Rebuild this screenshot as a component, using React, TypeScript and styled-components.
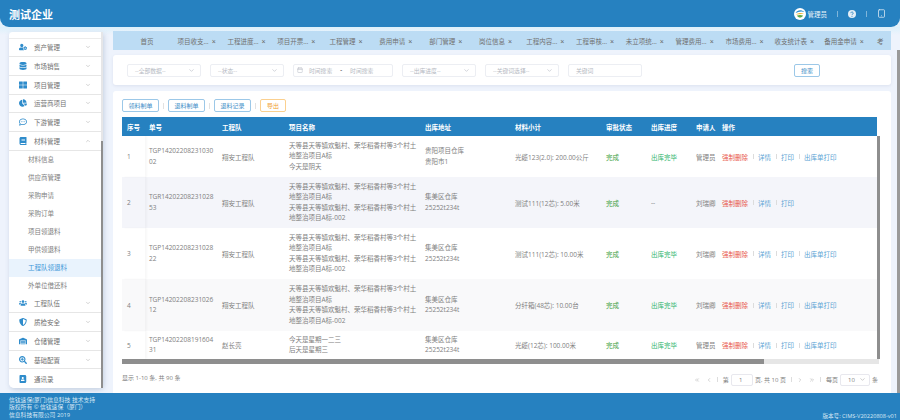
import React from "react";
import styled, { createGlobalStyle } from "styled-components";
import { FaUserCog, FaDatabase, FaThLarge, FaChartPie, FaRegCommentDots, FaBook, FaUsers, FaShieldAlt, FaWarehouse, FaSearchPlus, FaAddressBook } from "react-icons/fa";
import { ChevronDown, ChevronUp, ChevronLeft, ChevronRight, ChevronsLeft, ChevronsRight, Calendar, Tablet } from "lucide-react";

const GlobalStyle = createGlobalStyle`
  html, body { margin: 0; padding: 0; width: 900px; height: 420px; overflow: hidden; }
  * { box-sizing: border-box; }
  body { font-family: "Open Sans", "Noto Sans CJK SC", sans-serif; font-size: 6.5px; color: #808080; }
`;

const menuTop = [
  { name: "资产管理", icon: <FaUserCog /> },
  { name: "市场销售", icon: <FaDatabase /> },
  { name: "项目管理", icon: <FaThLarge /> },
  { name: "运营商项目", icon: <FaChartPie /> },
  { name: "下游管理", icon: <FaRegCommentDots /> },
];
const subMenu = ["材料信息", "供应商管理", "采购申请", "采购订单", "项目领退料", "甲供领退料", "工程队领退料", "外单位借还料"];
const menuBottom = [
  { name: "工程队伍", icon: <FaUsers />, arrow: true },
  { name: "质检安全", icon: <FaShieldAlt />, arrow: true },
  { name: "仓储管理", icon: <FaWarehouse />, arrow: true },
  { name: "基础配置", icon: <FaSearchPlus />, arrow: true },
  { name: "通讯录", icon: <FaAddressBook />, arrow: false },
];
const tabs = ["项目收支…", "工程进度…", "项目开票…", "工程管理", "费用申请", "部门管理", "岗位信息", "工程内容…", "工程审核…", "未立项统…", "管理费用…", "市场费用…", "收支统计表", "备用金申请"];

const longName = "天等县天等镇欢魁村、荣华稻香村等3个村土";
const rows = [
  { no: ["TGP14202208231030", "02"], team: "翔安工程队", project: [longName, "地整治项目A标", "今天是阴天"], addr: ["贵阳项目仓库", "贵阳市1"], mat: "光缆123(2.0): 200.00公斤", out: "出库完毕", user: "管理员", print: true, h: 41, bg: "#fff" },
  { no: ["TGR14202208231028", "53"], team: "翔安工程队", project: [longName, "地整治项目A标", longName, "地整治项目A标-002"], addr: ["集美区仓库", "25252t234t"], mat: "测试111(12芯): 5.00米", out: "--", user: "刘瑞卿", print: false, h: 51, bg: "#f4f5fa" },
  { no: ["TGP14202208231028", "22"], team: "翔安工程队", project: [longName, "地整治项目A标", longName, "地整治项目A标-002"], addr: ["集美区仓库", "25252t234t"], mat: "测试111(12芯): 10.00米", out: "出库完毕", user: "刘瑞卿", print: true, h: 51, bg: "#fff" },
  { no: ["TGP14202208231026", "12"], team: "翔安工程队", project: [longName, "地整治项目A标", longName, "地整治项目A标-002"], addr: ["集美区仓库", "25252t234t"], mat: "分纤箱(48芯): 10.00台", out: "出库完毕", user: "刘瑞卿", print: true, h: 52, bg: "#f9f9fa" },
  { no: ["TGP14202208191604", "31"], team: "赵长亮", project: ["今天是星期一二三", "后天是星期三"], addr: ["集美区仓库", "25252t234t"], mat: "光缆(12芯): 100.00米", out: "出库完毕", user: "管理员", print: true, h: 28, bg: "#fff" },
];
const columns = [
  { title: "序号", w: 23 }, { title: "单号", w: 73 }, { title: "工程队", w: 67 }, { title: "项目名称", w: 136 }, { title: "出库地址", w: 90 },
  { title: "材料小计", w: 91 }, { title: "审批状态", w: 45 }, { title: "出库进度", w: 45 }, { title: "申请人", w: 26 }, { title: "操作", w: 159 },
];

export default function App() {
  return (
    <Page>
      <GlobalStyle />
      <Header>
        <Title>测试企业</Title>
        <HeaderRight>
          <Avatar viewBox="0 0 24 24">
            <circle cx="12" cy="12" r="12" fill="#fff" />
            <path d="M3 10C7 3 15 3 21 8c-6-2-12-1-18 2z" fill="#2f8fd0" />
            <path d="M4 13c5-4 11-4 16-1-5-.5-11 0-16 1z" fill="#f2b632" />
            <path d="M6 15c4-1.500 8-1.500 12 0-1 3-4 4-6 4s-5-1-6-4z" fill="#5ba84a" />
          </Avatar>
          <UserName>管理员</UserName>
          <HeaderSep />
          <HelpIcon viewBox="0 0 24 24">
            <circle cx="12" cy="12" r="12" fill="#e4eef6" />
            <path d="M8.500 9.500a3.500 3.500 0 1 1 5.500 2.800c-1.200.8-2 1.400-2 2.900" fill="none" stroke="#2681c0" strokeWidth="2.600" />
            <circle cx="12" cy="19" r="1.600" fill="#2681c0" />
          </HelpIcon>
          <HeaderSep />
          <Tablet size={9} color="#e4eef6" strokeWidth={2} />
        </HeaderRight>
      </Header>

      <Main>
        <Sidebar>
          <MenuBox>
            <TopStub />
            {menuTop.map((m) => (
              <MenuItem key={m.name}>
                <MenuIcon>{m.icon}</MenuIcon>
                <MenuName>{m.name}</MenuName>
                <ChevronDown size={6} color="#aaa" />
              </MenuItem>
            ))}
            <MenuItem>
              <MenuIcon><FaBook /></MenuIcon>
              <MenuName>材料管理</MenuName>
              <ChevronUp size={6} color="#aaa" />
            </MenuItem>
            {subMenu.map((s) => (
              <SubItem key={s} $active={s === "工程队领退料"}>{s}</SubItem>
            ))}
            {menuBottom.map((m) => (
              <MenuItem key={m.name}>
                <MenuIcon>{m.icon}</MenuIcon>
                <MenuName>{m.name}</MenuName>
                {m.arrow && <ChevronDown size={6} color="#aaa" />}
              </MenuItem>
            ))}
          </MenuBox>
          <SideScroll><SideThumb /></SideScroll>
        </Sidebar>

        <Content>
          <TabBar>
            <Tab>首页</Tab>
            {tabs.map((t) => (
              <Tab key={t}>{t}<TabClose>×</TabClose></Tab>
            ))}
            <LastTab>考</LastTab>
          </TabBar>

          <SearchCard>
            <Select>--全部数据--<ChevronDown size={7} color="#b5b9c2" /></Select>
            <Select>--状态--<ChevronDown size={7} color="#b5b9c2" /></Select>
            <DateField>
              <Calendar size={6} color="#b5b9c2" />
              <span>时间搜索</span><b>-</b><span>时间搜索</span>
            </DateField>
            <Select>--出库进度--<ChevronDown size={7} color="#b5b9c2" /></Select>
            <Select>--关键词选择--<ChevronDown size={7} color="#b5b9c2" /></Select>
            <Select>关键词</Select>
            <SearchBtn>搜索</SearchBtn>
          </SearchCard>

          <TableCard>
            <Toolbar>
              <ToolBtn>领料制单</ToolBtn>
              <ToolSep />
              <ToolBtn>退料制单</ToolBtn>
              <ToolSep />
              <ToolBtn>退料记录</ToolBtn>
              <ToolSep />
              <ToolBtn $orange>导出</ToolBtn>
            </Toolbar>
            <HeadRow>
              {columns.map((c) => <HeadCell key={c.title} $w={c.w}>{c.title}</HeadCell>)}
            </HeadRow>
            <BodyWrap>
              <RowList>
                {rows.map((r, i) => (
                  <Row key={i} $h={r.h} $bg={r.bg}>
                    <IndexCell $w={columns[0].w}>{i + 1}</IndexCell>
                    <Cell $w={columns[1].w}>{r.no.map((l) => <Line key={l}>{l}</Line>)}</Cell>
                    <Cell $w={columns[2].w}>{r.team}</Cell>
                    <Cell $w={columns[3].w}>{r.project.map((l, j) => <Line key={j}>{l}</Line>)}</Cell>
                    <Cell $w={columns[4].w}>{r.addr.map((l) => <Line key={l}>{l}</Line>)}</Cell>
                    <Cell $w={columns[5].w}>{r.mat}</Cell>
                    <Cell $w={columns[6].w} $color="#3f9f3f">完成</Cell>
                    <Cell $w={columns[7].w} $color={r.out === "--" ? "#808080" : "#2fb56c"}>{r.out}</Cell>
                    <Cell $w={columns[8].w}>{r.user}</Cell>
                    <OpCell $w={columns[9].w}>
                      <OpLink $danger>强制删除</OpLink><OpSep />
                      <OpLink>详情</OpLink><OpSep />
                      <OpLink>打印</OpLink>
                      {r.print && <><OpSep /><OpLink>出库单打印</OpLink></>}
                    </OpCell>
                  </Row>
                ))}
              </RowList>
              <TableVScroll />
            </BodyWrap>
            <HScroll><HThumb /></HScroll>
            <PagerRow>
              <PagerTotal>显示 1-10 条, 共 90 条</PagerTotal>
              <Pager>
                <PagerArrows>
                  <ChevronsLeft size={6} color="#aaa" />
                  <ChevronLeft size={6} color="#aaa" />
                </PagerArrows>
                <PagerSep />
                <span>第</span>
                <PageInput>1</PageInput>
                <span>页, 共 10 页</span>
                <PagerSep />
                <PagerArrows>
                  <ChevronRight size={6} color="#aaa" />
                  <ChevronsRight size={6} color="#aaa" />
                </PagerArrows>
                <PagerSep />
                <span>每页</span>
                <PageSize>10<ChevronDown size={7} color="#aaa" /></PageSize>
                <span>条</span>
              </Pager>
            </PagerRow>
          </TableCard>
        </Content>
        <PageScroll />
      </Main>

      <Footer>
        <FooterInfo>
          <div>信钛速保(厦门)信息科技 技术支持</div>
          <div>版权所有 © 信钛速保（厦门）</div>
          <div>信息科技有限公司 2019</div>
        </FooterInfo>
        <Version>版本号: CIMS-V20220808-v01</Version>
      </Footer>
    </Page>
  );
}

const Page = styled.div`
  width: 900px;
  height: 420px;
  display: flex;
  flex-direction: column;
  overflow: hidden;
  background: #e3f1fb;
`;

const Header = styled.div`
  height: 27px;
  flex: none;
  display: flex;
  align-items: center;
  justify-content: space-between;
  padding: 0 14px 0 9px;
  background: #2681c0;
  border-radius: 0 0 9px 9px;
  color: #fff;
`;
const Title = styled.div`
  font-size: 11px;
  font-weight: 700;
  font-family: "Noto Sans CJK SC", sans-serif;
`;
const HeaderRight = styled.div`
  display: flex;
  align-items: center;
`;
const Avatar = styled.svg`
  width: 12px;
  height: 12px;
`;
const UserName = styled.span`
  margin-left: 2px;
  font-size: 6.5px;
  color: #e8f2f9;
`;
const HeaderSep = styled.span`
  width: 1px;
  height: 6px;
  margin: 0 10px;
  background: #7fb5da;
`;
const HelpIcon = styled.svg`
  width: 8px;
  height: 8px;
`;

const Main = styled.div`
  flex: 1;
  min-height: 0;
  display: flex;
  background: linear-gradient(#dcf0fb 0, #eef3fc 8px);
`;

const Sidebar = styled.div`
  width: 94px;
  margin: 5px 10px 5px 9px;
  flex: none;
  display: flex;
  box-shadow: 1px 2px 5px rgba(80, 110, 150, 0.25);
  border-radius: 0 0 5px 5px;
`;
const MenuBox = styled.div`
  width: 92px;
  background: #fff;
  border-radius: 4px 0 0 5px;
  overflow: hidden;
`;
const TopStub = styled.div`
  height: 6.5px;
  border-bottom: 1.5px solid #ececec;
`;
const MenuItem = styled.div`
  height: 18.7px;
  display: flex;
  align-items: center;
  padding: 0 10px;
  border-bottom: 1.2px solid #e6e6e6;
  color: #707070;
  &:last-child { border-bottom: none; }
`;
const MenuIcon = styled.span`
  width: 8px;
  display: flex;
  color: #2f8ccb;
  font-size: 8px;
`;
const MenuName = styled.span`
  flex: 1;
  margin-left: 7px;
  font-size: 6.5px;
`;
const SubItem = styled.div<{ $active?: boolean }>`
  height: 18px;
  line-height: 18px;
  padding-left: 19px;
  font-size: 6.5px;
  color: ${(p) => (p.$active ? "#3d96d8" : "#808080")};
  background: ${(p) => (p.$active ? "#e9f3fd" : "#fff")};
`;
const SideScroll = styled.div`
  width: 2.5px;
  background: #e6e6e8;
  display: flex;
  flex-direction: column;
  justify-content: flex-end;
`;
const SideThumb = styled.div`
  height: 247px;
  background: #8e8e8e;
`;

const Content = styled.div`
  flex: 1;
  min-width: 0;
  padding: 4px 6px 0 0;
  display: flex;
  flex-direction: column;
`;
const TabBar = styled.div`
  height: 19px;
  width: 778px;
  flex: none;
  display: flex;
  align-items: center;
  padding-left: 9px;
  background: #bcdcf4;
  overflow: hidden;
`;
const Tab = styled.div`
  width: 49.8px;
  flex: none;
  text-align: center;
  white-space: nowrap;
  font-size: 6.5px;
  color: #707070;
`;
const LastTab = styled(Tab)`
  width: 14px;
  padding-left: 8px;
  text-align: left;
`;
const TabClose = styled.span`
  margin-left: 3px;
  font-family: "Liberation Sans", sans-serif;
  font-size: 7px;
  color: #666;
`;
const SearchCard = styled.div`
  height: 30px;
  margin-top: 5px;
  flex: none;
  display: flex;
  align-items: center;
  gap: 9px;
  padding: 0 14px;
  background: #fff;
  border-radius: 3px;
  box-shadow: 0 1px 3px rgba(120, 130, 170, 0.15);
`;
const Select = styled.div`
  width: 74px;
  height: 13px;
  display: flex;
  align-items: center;
  justify-content: space-between;
  padding: 0 5px 0 7px;
  border: 1px solid #eceef3;
  border-radius: 2px;
  color: #b5b9c2;
  font-size: 5.8px;
`;
const DateField = styled(Select)`
  width: 100px;
  justify-content: flex-start;
  gap: 6px;
  padding-left: 3px;
  b { margin: 0 2px; color: #555; }
`;
const SearchBtn = styled.button`
  width: 26px;
  height: 13px;
  margin-left: 143px;
  padding: 0;
  background: #fff;
  border: 1px solid #9cc8e8;
  border-radius: 2px;
  color: #3f8fc8;
  font: inherit;
  font-size: 6px;
`;
const TableCard = styled.div`
  flex: 1;
  min-height: 0;
  margin-top: 6px;
  padding: 0 10px 0 9px;
  background: #fff;
  border-radius: 3px 3px 0 0;
`;
const Toolbar = styled.div`
  height: 26px;
  display: flex;
  align-items: center;
  padding-top: 3px;
`;
const ToolBtn = styled.button<{ $orange?: boolean }>`
  width: ${(p) => (p.$orange ? "26px" : "37px")};
  height: 13px;
  padding: 0;
  background: #fff;
  border: 1px solid ${(p) => (p.$orange ? "#fbd08f" : "#9cc8e8")};
  border-radius: 2px;
  color: ${(p) => (p.$orange ? "#f0a030" : "#3f8fc8")};
  font: inherit;
  font-size: 6px;
`;
const ToolSep = styled.span`
  width: 1px;
  height: 6px;
  margin: 0 4px;
  background: #e2e2e2;
`;
const HeadRow = styled.div`
  width: 755px;
  height: 19px;
  display: flex;
  align-items: center;
  background: #2681c0;
`;
const HeadCell = styled.div<{ $w: number }>`
  width: ${(p) => p.$w}px;
  flex: none;
  padding-left: 4px;
  color: #fff;
  font-size: 6.5px;
  font-weight: 700;
  font-family: "Noto Sans CJK SC", sans-serif;
  &:first-child { padding-left: 5px; }
`;
const BodyWrap = styled.div`
  height: 223px;
  display: flex;
`;
const RowList = styled.div`
  width: 755px;
  flex: none;
`;
const Row = styled.div<{ $h: number; $bg: string }>`
  height: ${(p) => p.$h}px;
  display: flex;
  background: ${(p) => p.$bg};
`;
const Cell = styled.div<{ $w: number; $color?: string }>`
  width: ${(p) => p.$w}px;
  flex: none;
  display: flex;
  flex-direction: column;
  justify-content: center;
  padding-left: 4px;
  color: ${(p) => p.$color ?? "#808080"};
  font-size: 6.5px;
  white-space: nowrap;
`;
const IndexCell = styled(Cell)`
  padding-left: 5px;
  box-shadow: 2px 0 2px rgba(0, 0, 0, 0.03);
`;
const Line = styled.div`
  line-height: 10.5px;
`;
const OpCell = styled(Cell)`
  flex-direction: row;
  align-items: center;
  justify-content: flex-start;
`;
const OpLink = styled.span<{ $danger?: boolean }>`
  color: ${(p) => (p.$danger ? "#e8574a" : "#5aa3d4")};
`;
const OpSep = styled.span`
  width: 1px;
  height: 5px;
  margin: 0 4.5px;
  background: #dcdcdc;
`;
const TableVScroll = styled.div`
  width: 2.5px;
  flex: none;
  background: #8e8e8e;
`;
const HScroll = styled.div`
  width: 757px;
  height: 5px;
  background: #e6e6e6;
`;
const HThumb = styled.div`
  width: 642px;
  height: 100%;
  background: #8e8e8e;
`;
const PagerRow = styled.div`
  height: 27px;
  width: 756px;
  padding-top: 4px;
  display: flex;
  align-items: center;
  justify-content: space-between;
  font-size: 6px;
  color: #808080;
`;
const PagerTotal = styled.span`
  margin-bottom: 4px;
`;
const Pager = styled.div`
  display: flex;
  align-items: center;
  gap: 2px;
`;
const PagerArrows = styled.div`
  display: flex;
  gap: 6px;
`;
const PagerSep = styled.span`
  width: 1px;
  height: 5px;
  margin: 0 3px;
  background: #ddd;
`;
const PageInput = styled.div`
  width: 22px;
  height: 12px;
  line-height: 10px;
  padding-left: 7px;
  border: 1px solid #e8e8ee;
  border-radius: 2px;
`;
const PageSize = styled.div`
  width: 30px;
  height: 12px;
  display: flex;
  align-items: center;
  justify-content: space-between;
  padding: 0 3px 0 7px;
  border: 1px solid #e8e8ee;
  border-radius: 2px;
`;
const PageScroll = styled.div`
  width: 3px;
  margin-top: 23px;
  flex: none;
  background: #9a9a9a;
`;

const Footer = styled.div`
  height: 27px;
  flex: none;
  display: flex;
  align-items: flex-end;
  justify-content: space-between;
  padding: 2px 3px 0 9px;
  background: #2681c0;
  color: #d9e9f5;
  font-size: 5.8px;
`;
const FooterInfo = styled.div`
  line-height: 7.8px;
`;
const Version = styled.div`
  line-height: 8px;
  font-size: 5.6px;
`;
